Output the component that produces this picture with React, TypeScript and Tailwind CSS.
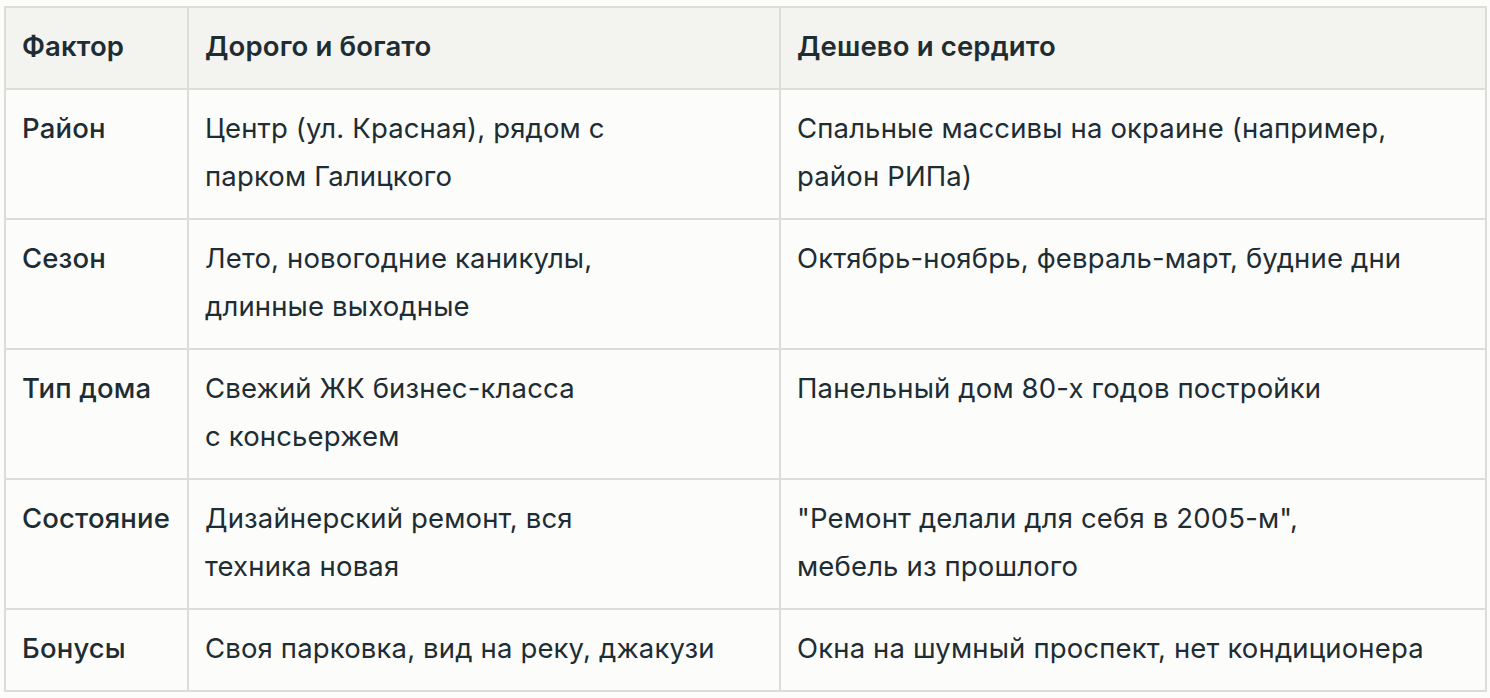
import React from "react";

const rows: { f: string; a: React.ReactNode; b: React.ReactNode }[] = [
  {
    f: "Район",
    a: (
      <>
        Центр (ул. Красная), рядом с<br />
        парком Галицкого
      </>
    ),
    b: (
      <>
        Спальные массивы на окраине (например,
        <br />
        район РИПа)
      </>
    ),
  },
  {
    f: "Сезон",
    a: (
      <>
        Лето, новогодние каникулы,
        <br />
        длинные выходные
      </>
    ),
    b: <>Октябрь-ноябрь, февраль-март, будние дни</>,
  },
  {
    f: "Тип дома",
    a: (
      <>
        Свежий ЖК бизнес-класса
        <br />с консьержем
      </>
    ),
    b: <>Панельный дом 80-х годов постройки</>,
  },
  {
    f: "Состояние",
    a: (
      <>
        Дизайнерский ремонт, вся
        <br />
        техника новая
      </>
    ),
    b: (
      <>
        "Ремонт делали для себя в 2005-м",
        <br />
        мебель из прошлого
      </>
    ),
  },
  {
    f: "Бонусы",
    a: <>Своя парковка, вид на реку, джакузи</>,
    b: <>Окна на шумный проспект, нет кондиционера</>,
  },
];

export default function App() {
  const cell =
    "border-2 border-[#dcdcd8] px-4 pt-[14px] pb-[18px] align-top text-left";
  return (
    <div className="min-h-[698px] w-[1490px] bg-[#fcfcfb] pt-[6px] pl-[4px] font-['Inter',sans-serif] text-[27.5px] leading-[48px] tracking-[0.15px] text-[#1e2d33]">
      <table className="table-fixed border-collapse w-[1481px]">
        <colgroup>
          <col className="w-[183px]" />
          <col className="w-[592px]" />
          <col className="w-[706px]" />
        </colgroup>
        <thead>
          <tr className="bg-[#f3f3ef]">
            <th className={`${cell} font-semibold`}>Фактор</th>
            <th className={`${cell} font-semibold`}>Дорого и богато</th>
            <th className={`${cell} font-semibold`}>Дешево и сердито</th>
          </tr>
        </thead>
        <tbody>
          {rows.map((r) => (
            <tr key={r.f}>
              <td className={`${cell} font-medium whitespace-nowrap`}>{r.f}</td>
              <td className={cell}>{r.a}</td>
              <td className={cell}>{r.b}</td>
            </tr>
          ))}
        </tbody>
      </table>
    </div>
  );
}
